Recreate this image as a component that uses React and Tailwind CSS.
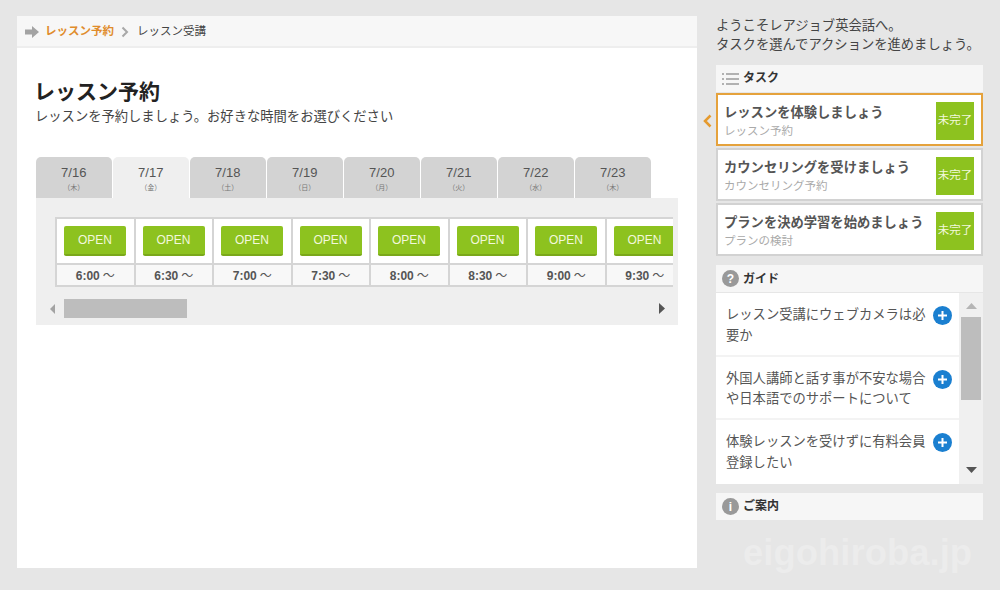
import React from 'react';

const days = [
    ['7/16', '木'], ['7/17', '金'], ['7/18', '土'], ['7/19', '日'],
    ['7/20', '月'], ['7/21', '火'], ['7/22', '水'], ['7/23', '木'],
];
const times = ['6:00', '6:30', '7:00', '7:30', '8:00', '8:30', '9:00', '9:30'];
const tasks = [
    ['レッスンを体験しましょう', 'レッスン予約'],
    ['カウンセリングを受けましょう', 'カウンセリング予約'],
    ['プランを決め学習を始めましょう', 'プランの検討'],
];
const guides = [
    'レッスン受講にウェブカメラは必要か',
    '外国人講師と話す事が不安な場合や日本語でのサポートについて',
    '体験レッスンを受けずに有料会員登録したい',
];

const SectionHead = ({ icon, raised, children }) => (
    <div className="h-[27px] bg-[#f6f6f6] flex items-center pl-[6px] gap-[4px] text-[12px] font-bold text-[#333]">
        {icon}
        <span className={raised ? 'pb-[2px]' : ''}>{children}</span>
    </div>
);

export default function App() {
    return (
        <div className="relative w-[1000px] h-[590px] overflow-hidden bg-[#e6e6e6] flex items-start pt-[16px] pl-[17px] font-['Liberation_Sans','Noto_Sans_CJK_JP',sans-serif] text-[#444]">
            <main className="w-[680px] h-[552px] bg-white">
                <div className="h-[32px] bg-[#f7f7f7] border-b-2 border-[#eeeeee] flex items-center pl-[8px] pt-[1px] text-[11.5px]">
                    <svg width="14" height="12" viewBox="0 0 14 12" className="mr-[6px]">
                        <path d="M0 3.5h7V0l7 6-7 6V8.5H0z" fill="#a3a3a3" />
                    </svg>
                    <span className="font-bold text-[#e08c2c]">レッスン予約</span>
                    <svg width="8" height="12" viewBox="0 0 8 12" className="ml-[7px] mr-[8px]">
                        <path d="M1.5 1.5 6 6l-4.500 4.500" fill="none" stroke="#a8a8a8" strokeWidth="2" />
                    </svg>
                    <span className="text-[#444]">レッスン受講</span>
                </div>

                <div className="pl-[19px] pt-[30px]">
                    <h1 className="text-[21px] leading-[28px] font-bold text-[#222] -ml-[2px]">レッスン予約</h1>
                    <p className="text-[13.3px] leading-[20px] mt-[1px] text-[#444] -ml-[1px]">レッスンを予約しましょう。お好きな時間をお選びください</p>

                    <div className="flex gap-[1.500px] mt-[30px] w-[642px]">
                        {days.map(([date, week], i) => (
                            <div
                                key={date}
                                className={`w-[75.500px] h-[41px] rounded-t-[5px] flex flex-col items-center pt-[8px] ${i === 1 ? 'bg-[#efefef]' : 'bg-[#d3d3d3]'}`}
                            >
                                <span className="text-[13px] leading-[16px] text-[#555]">{date}</span>
                                <span className="text-[7px] leading-[10px] mt-[2px] text-[#777]">（{week}）</span>
                            </div>
                        ))}
                    </div>

                    <div className="w-[642px] h-[127px] bg-[#efefef] pt-[19px] pl-[19px]">
                        <div className="w-[618px] overflow-hidden">
                            <div className="flex w-max border-y-2 border-l-2 border-[#d5d5d5]">
                                {times.map((t) => (
                                    <div key={t} className="w-[78.500px] shrink-0 border-r-2 border-[#d5d5d5]">
                                        <div className="h-[44px] bg-white pl-[7px] pt-[7px]">
                                            <div className="w-[62px] h-[30px] rounded-[2px] bg-[#8dc21f] border-b-2 border-[#7aa81a] flex items-center justify-center text-[12px] text-[#f2f8dc]">
                                                OPEN
                                            </div>
                                        </div>
                                        <div className="h-[22px] bg-[#f8f8f8] border-t-2 border-[#d5d5d5] flex items-center justify-center pt-[1px] text-[12px] font-bold text-[#555]">
                                            {t} <span className="font-normal ml-[3px]">～</span>
                                        </div>
                                    </div>
                                ))}
                            </div>
                        </div>
                        <div className="flex items-center w-[618px] h-[19px] mt-[12px] -ml-[3px]">
                            <svg width="5" height="10" viewBox="0 0 5 10" className="ml-[-2px] mr-[9px]">
                                <path d="M5 0v10L0 5z" fill="#a3a3a3" />
                            </svg>
                            <div className="w-[123px] h-[19px] bg-[#bdbdbd]" />
                            <svg width="6" height="11" viewBox="0 0 6 11" className="ml-[472px]">
                                <path d="M0 0v11l6-5.500z" fill="#555" />
                            </svg>
                        </div>
                    </div>
                </div>
            </main>

            <aside className="w-[267px] ml-[19px]">
                <p className="text-[13.3px] leading-[19px] text-[#444]">ようこそレアジョブ英会話へ。<br />タスクを選んでアクションを進めましょう。</p>

                <div className="mt-[11px]">
                    <SectionHead
                        raised
                        icon={
                            <svg width="17" height="14" viewBox="0 0 17 14">
                                <g stroke="#9a9a9a" strokeWidth="1.300">
                                    <path d="M4 2h13M4 7h13M4 12h13" />
                                    <path d="M0 2h2M0 7h2M0 12h2" />
                                </g>
                            </svg>
                        }
                    >
                        タスク
                    </SectionHead>
                    <div className="relative flex flex-col gap-[2px] mt-[1px]">
                        <svg width="9" height="14" viewBox="0 0 9 14" className="absolute left-[-13px] top-[21px]">
                            <path d="M7.500 1.500 2 7l5.500 5.500" fill="none" stroke="#e59a2e" strokeWidth="2.500" />
                        </svg>
                        {tasks.map(([title, sub], i) => (
                            <div
                                key={title}
                                className={`h-[53px] bg-white border-2 flex items-start justify-between pt-[7px] pl-[6px] pr-[7px] ${i === 0 ? 'border-[#e5a23c]' : 'border-[#d2d2d2]'}`}
                            >
                                <div className="mt-[1px]">
                                    <div className="text-[13.3px] leading-[19px] font-bold text-[#555] whitespace-nowrap">{title}</div>
                                    <div className="text-[11.5px] leading-[19px] text-[#aaa]">{sub}</div>
                                </div>
                                <div className="w-[38px] h-[38px] shrink-0 bg-[#8dc21f] flex items-center justify-center text-[11.5px] text-[#f2f8dc] whitespace-nowrap">未完了</div>
                            </div>
                        ))}
                    </div>
                </div>

                <div className="mt-[9px]">
                    <SectionHead
                        icon={
                            <span className="w-[17px] h-[17px] rounded-full bg-[#999] text-white text-[12px] font-bold flex items-center justify-center">?</span>
                        }
                    >
                        ガイド
                    </SectionHead>
                    <div className="flex h-[191px] mt-[1px]">
                        <div className="w-[243px] bg-white">
                            {guides.map((g, i) => (
                                <div key={g} className={`h-[63.500px] pl-[10px] pt-[12px] flex items-start ${i < 2 ? 'border-b-2 border-[#f3f3f3]' : ''}`}>
                                    <p className="w-[203px] text-[13.3px] leading-[20.5px] text-[#555]">{g}</p>
                                    <span className="w-[19px] h-[19px] mt-[1px] ml-[4px] shrink-0 rounded-full bg-[#1a7fd0] flex items-center justify-center">
                                        <svg width="11" height="11" viewBox="0 0 11 11">
                                            <path d="M5.500 1v9M1 5.500h9" stroke="#fff" strokeWidth="2" />
                                        </svg>
                                    </span>
                                </div>
                            ))}
                        </div>
                        <div className="w-[24px] bg-[#f0f0f0] flex flex-col items-center pt-[10px]">
                            <svg width="11" height="6" viewBox="0 0 11 6"><path d="M0 6h11L5.500 0z" fill="#b5b5b5" /></svg>
                            <div className="w-[20px] h-[83px] mt-[8px] bg-[#bdbdbd]" />
                            <svg width="11" height="6" viewBox="0 0 11 6" className="mt-[67px]"><path d="M0 0h11L5.500 6z" fill="#555" /></svg>
                        </div>
                    </div>
                </div>

                <div className="mt-[9px]">
                    <SectionHead
                        raised
                        icon={
                            <span className="w-[17px] h-[17px] rounded-full bg-[#999] text-white text-[12px] font-bold flex items-center justify-center">i</span>
                        }
                    >
                        ご案内
                    </SectionHead>
                </div>
            </aside>

            <div className="absolute left-[743px] top-[531px] text-[36.5px] leading-[44px] font-bold text-white/25">eigohiroba.jp</div>
        </div>
    );
}
